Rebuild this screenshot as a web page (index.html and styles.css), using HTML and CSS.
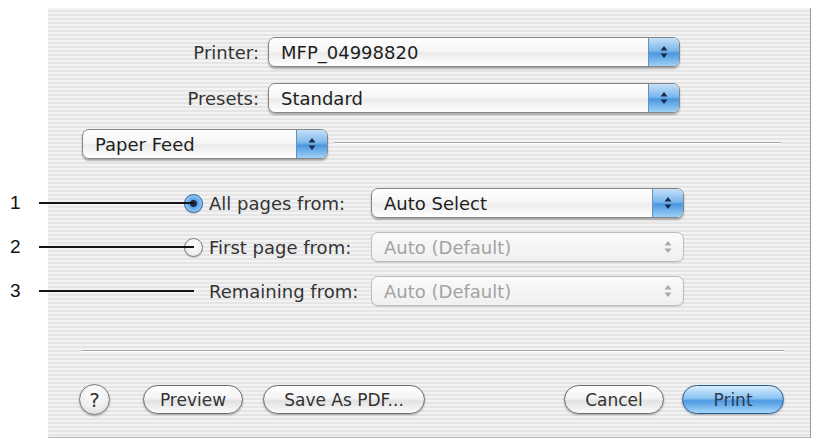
FILE: index.html
```html
<!DOCTYPE html>
<html>
<head>
<meta charset="utf-8">
<link rel="stylesheet" href="styles.css">
</head>
<body>
<div class="panel">
  <div class="top-grid">
    <span class="lbl">Printer:</span>
    <div class="popup wide"><span class="ptxt">MFP_04998820</span><span class="arrows"><svg width="10" height="16" viewBox="0 0 10 16"><path d="M5 2 L8.5 6.5 L1.5 6.5 Z M5 14 L8.5 9.5 L1.5 9.5 Z" fill="#1b2a4a"/></svg></span></div>
    <span class="lbl">Presets:</span>
    <div class="popup wide"><span class="ptxt">Standard</span><span class="arrows"><svg width="10" height="16" viewBox="0 0 10 16"><path d="M5 2 L8.5 6.5 L1.5 6.5 Z M5 14 L8.5 9.5 L1.5 9.5 Z" fill="#1b2a4a"/></svg></span></div>
  </div>

  <div class="pane-row">
    <div class="popup pane"><span class="ptxt">Paper Feed</span><span class="arrows"><svg width="10" height="16" viewBox="0 0 10 16"><path d="M5 2 L8.5 6.5 L1.5 6.5 Z M5 14 L8.5 9.5 L1.5 9.5 Z" fill="#1b2a4a"/></svg></span></div>
    <div class="sep"></div>
  </div>

  <div class="options">
    <div class="opt-row">
      <div class="callout"><span class="num">1</span><span class="cline"></span></div>
      <span class="radio on"></span>
      <span class="olbl">All pages from:</span>
      <div class="popup opt"><span class="ptxt">Auto Select</span><span class="arrows"><svg width="10" height="16" viewBox="0 0 10 16"><path d="M5 2 L8.5 6.5 L1.5 6.5 Z M5 14 L8.5 9.5 L1.5 9.5 Z" fill="#1b2a4a"/></svg></span></div>
    </div>
    <div class="opt-row">
      <div class="callout"><span class="num">2</span><span class="cline"></span></div>
      <span class="radio"></span>
      <span class="olbl">First page from:</span>
      <div class="popup opt disabled"><span class="ptxt">Auto (Default)</span><span class="arrows"><svg width="10" height="16" viewBox="0 0 10 16"><path d="M5 2 L8.5 6.5 L1.5 6.5 Z M5 14 L8.5 9.5 L1.5 9.5 Z" fill="#a9a9a9"/></svg></span></div>
    </div>
    <div class="opt-row">
      <div class="callout"><span class="num">3</span><span class="cline"></span></div>
      <span class="radio-space"></span>
      <span class="olbl">Remaining from:</span>
      <div class="popup opt disabled"><span class="ptxt">Auto (Default)</span><span class="arrows"><svg width="10" height="16" viewBox="0 0 10 16"><path d="M5 2 L8.5 6.5 L1.5 6.5 Z M5 14 L8.5 9.5 L1.5 9.5 Z" fill="#a9a9a9"/></svg></span></div>
    </div>
  </div>

  <div class="bottom-sep"></div>

  <div class="buttons">
    <span class="help">?</span>
    <span class="btn preview">Preview</span>
    <span class="btn pdf">Save As PDF...</span>
    <span class="spacer"></span>
    <span class="btn cancel">Cancel</span>
    <span class="btn print">Print</span>
  </div>
</div>
</body>
</html>
```

FILE: styles.css
```css
html, body {
  margin: 0;
  padding: 0;
  background: #ffffff;
}
body {
  width: 817px;
  height: 443px;
  overflow: hidden;
  font-family: "DejaVu Sans", "Liberation Sans", sans-serif;
  color: #2b2b2b;
}
.panel {
  margin: 8px 0 0 48px;
  width: 763px;
  height: 430px;
  box-sizing: border-box;
  border-left: 1px solid #ececec;
  border-right: 1px solid #9a9a9a;
  border-bottom: 1px solid #b5b5b5;
  background: repeating-linear-gradient(to bottom, #f3f3f3 0 2px, #e5e5e5 2px 4px);
  padding-top: 29px;
}
.top-grid {
  display: grid;
  grid-template-columns: 210px 412px;
  column-gap: 9px;
  row-gap: 16px;
  align-items: center;
}
.lbl {
  text-align: right;
  font-size: 18px;
  color: #333;
}
.popup {
  height: 30px;
  box-sizing: border-box;
  border: 1px solid #858585;
  border-radius: 7px;
  background: linear-gradient(to bottom, #ffffff 0%, #f6f6f6 45%, #ececec 55%, #ffffff 100%);
  box-shadow: 0 2px 2px rgba(0,0,0,0.28);
  display: flex;
  align-items: center;
  overflow: hidden;
}
.ptxt {
  flex: 1;
  padding-left: 12px;
  font-size: 18px;
  color: #1e1e1e;
  white-space: nowrap;
}
.arrows {
  width: 30px;
  align-self: stretch;
  display: flex;
  align-items: center;
  justify-content: center;
  background: linear-gradient(to bottom, #c4e0f8 0%, #7db8ec 45%, #4b98e0 55%, #9ed0f6 100%);
  border-left: 1px solid #6a8fb8;
}
.pane-row {
  display: flex;
  align-items: center;
  margin-top: 16px;
  padding-left: 33px;
}
.popup.pane {
  width: 246px;
}
.sep {
  flex: 0 0 447px;
  margin-left: 6px;
  height: 1px;
  background: #a8a8a8;
  box-shadow: 0 1px 0 #ffffff;
  margin-top: -4px;
}
.options {
  margin-top: 29px;
  display: flex;
  flex-direction: column;
  gap: 14px;
}
.opt-row {
  position: relative;
  display: flex;
  align-items: center;
  padding-left: 135px;
}
.callout {
  position: absolute;
  left: -48px;
  top: 50%;
  width: 193px;
  height: 22px;
  margin-top: -11px;
  display: flex;
  align-items: center;
  z-index: 2;
}
.num {
  width: 38px;
  box-sizing: border-box;
  padding-left: 9px;
  font-family: "Liberation Sans", Arial, sans-serif;
  font-size: 19px;
  color: #111;
}
.cline {
  flex: 1;
  height: 2px;
  background: #151515;
}
.radio, .radio-space {
  width: 19px;
  height: 19px;
  flex: 0 0 19px;
  box-sizing: border-box;
  margin-right: 6px;
}
.radio {
  border-radius: 50%;
  border: 1px solid #7e7e7e;
  background: radial-gradient(circle at 50% 35%, #ffffff 0%, #f0f0f0 60%, #d8d8d8 100%);
  box-shadow: 0 1px 1px rgba(0,0,0,0.2);
}
.radio.on {
  border-color: #2e5e96;
  background: radial-gradient(circle at 50% 50%, #1a2c48 0 3px, #5aa2e6 4px, #9acdf6 9px);
}
.olbl {
  width: 162px;
  font-size: 18px;
  color: #333;
  white-space: nowrap;
}
.popup.opt {
  width: 313px;
}
.popup.disabled {
  border-color: #bcbcbc;
  background: linear-gradient(to bottom, #fafafa, #f0f0f0);
  box-shadow: 0 1px 1px rgba(0,0,0,0.1);
}
.popup.disabled .ptxt {
  color: #a3a3a3;
}
.popup.disabled .arrows {
  background: transparent;
  border-left: none;
}
.bottom-sep {
  margin: 44px 0 0 32px;
  width: 703px;
  height: 1px;
  background: #a8a8a8;
  box-shadow: 0 1px 0 #ffffff;
}
.buttons {
  display: flex;
  align-items: center;
  margin-top: 33px;
  padding-left: 30px;
  width: 735px;
  box-sizing: border-box;
}
.help {
  width: 31px;
  height: 31px;
  box-sizing: border-box;
  border-radius: 50%;
  border: 1px solid #777;
  background: radial-gradient(circle at 50% 30%, #ffffff 0%, #eeeeee 60%, #d0d0d0 100%);
  box-shadow: 0 1px 2px rgba(0,0,0,0.3);
  display: flex;
  align-items: center;
  justify-content: center;
  font-size: 20px;
  color: #333;
  margin-right: 33px;
}
.btn {
  height: 29px;
  box-sizing: border-box;
  border: 1px solid #6a6a6a;
  border-radius: 15px;
  background: linear-gradient(to bottom, #ffffff 0%, #f4f4f4 45%, #e2e2e2 55%, #fafafa 100%);
  box-shadow: 0 1px 2px rgba(0,0,0,0.3);
  display: flex;
  align-items: center;
  justify-content: center;
  font-size: 17px;
  color: #333;
  white-space: nowrap;
}
.preview { width: 100px; margin-right: 20px; }
.pdf { width: 162px; }
.spacer { flex: 1; }
.cancel { width: 100px; margin-right: 18px; }
.print {
  width: 102px;
  border-color: #2d5a8e;
  background: linear-gradient(to bottom, #d6ecfc 0%, #8cc4f2 45%, #4c9ae2 55%, #a6d6fa 100%);
  color: #2a3a52;
}
```
